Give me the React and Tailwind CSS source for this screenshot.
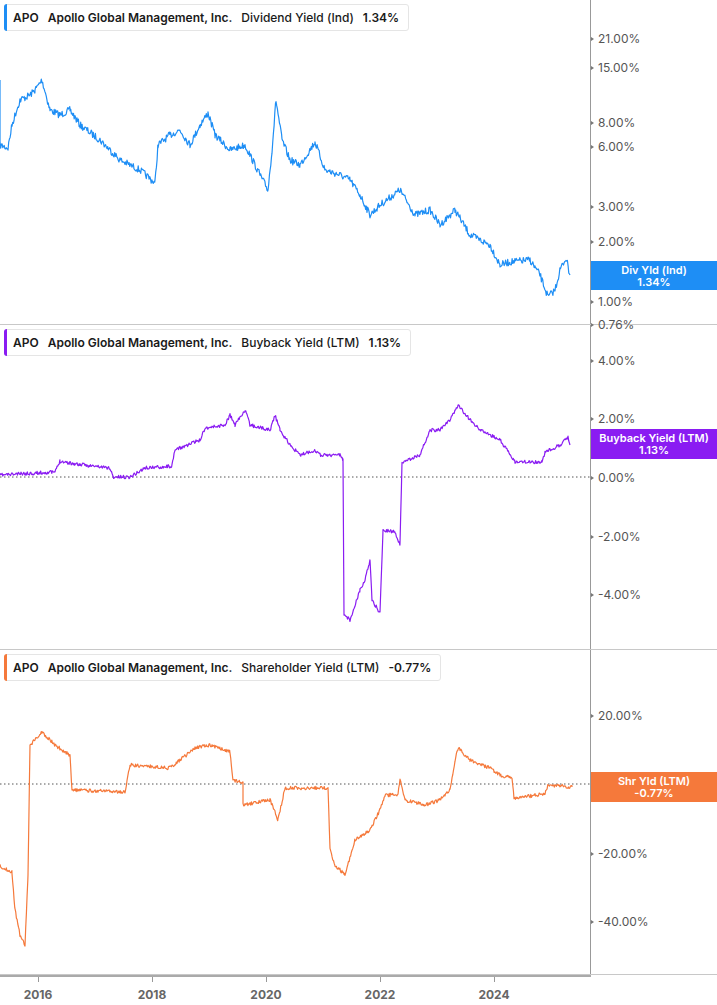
import React from "react";

function rng(seed){let s=seed;return()=>{s=(s*16807)%2147483647;return s/2147483647;};}
function series(pts,noise,seed,yOff){
  const r=rng(seed);const out=[];
  for(let i=0;i<pts.length-1;i++){
    const [x0,y0]=pts[i],[x1,y1]=pts[i+1];
    if(x1===x0){out.push([x0,y0-yOff]);continue;}
    for(let x=x0;x<x1;x+=0.7){
      const t=(x-x0)/(x1-x0);
      out.push([x,y0+(y1-y0)*t-yOff+(r()-0.5)*noise]);
    }
  }
  const l=pts[pts.length-1];out.push([l[0],l[1]-yOff]);
  return out.map(p=>p[0].toFixed(1)+","+p[1].toFixed(1)).join(" ");
}
const blue=[[0,80],[0,145],[8,148],[12,125],[15,115],[20,100],[30,95],[35,90],[42,80],[50,110],[60,115],[70,110],[80,125],[100,140],[120,160],[140,170],[155,183],[158,145],[170,135],[180,130],[190,145],[200,125],[208,113],[215,135],[230,150],[245,145],[260,175],[268,190],[272,150],[276,100],[282,140],[290,160],[300,165],[315,142],[325,170],[340,175],[350,180],[360,195],[370,215],[380,205],[400,190],[415,215],[430,210],[440,225],[455,210],[470,235],[490,245],[500,265],[510,262],[530,260],[540,275],[548,297],[555,290],[560,270],[566,258],[570,275]];
const purple=[[0,475],[55,472],[60,461],[75,464],[110,468],[113,477],[130,477],[145,468],[172,466],[175,450],[200,440],[205,428],[225,425],[230,415],[235,425],[245,410],[250,425],[270,430],[275,415],[280,430],[290,445],[300,455],[315,450],[320,455],[340,455],[343,460],[344,615],[350,620],[360,590],[365,580],[370,560],[372,600],[380,613],[383,530],[395,532],[400,545],[402,462],[420,455],[430,430],[440,430],[450,420],[458,405],[470,420],[480,430],[500,440],[515,462],[530,462],[542,462],[545,452],[560,445],[568,437],[570,445]];
const orange=[[0,866],[12,872],[15,910],[20,935],[25,945],[28,875],[30,745],[42,732],[55,745],[70,755],[72,790],[125,792],[130,765],[170,768],[195,748],[210,745],[230,752],[233,780],[243,782],[243,805],[270,800],[278,820],[285,788],[328,788],[330,850],[335,865],[345,875],[355,840],[370,830],[380,810],[385,795],[398,795],[400,778],[405,800],[425,805],[440,800],[450,790],[455,760],[458,748],[470,760],[490,768],[500,775],[512,778],[514,798],[545,794],[548,785],[560,786],[572,787]];

const F={fontFamily:"Inter, 'Liberation Sans', sans-serif"};
function Panel({top,h,color,legend,metric,val,pts,noise,seed,labels,badge,zero}){
  return(
    <div className="relative w-full border-b border-[#c8c8c8]" style={{height:h}}>
      <svg className="absolute left-0 top-0" width="590" height={h}>
        {zero!=null&&<line x1="0" x2="590" y1={zero-top} y2={zero-top} stroke="#555" strokeDasharray="1.5 2.5" strokeWidth="1"/>}
        <polyline points={series(pts,noise,seed,top)} fill="none" stroke={color} strokeWidth="1.2" strokeLinejoin="round"/>
      </svg>
      <div className="absolute left-[590px] top-0 h-full w-px bg-[#999]"/>
      <div className="absolute left-[4px] top-[4px] flex h-[27px] items-center gap-[9px] rounded-[3px] border border-[#e5e5e5] bg-white pl-[8px] pr-[9px] text-[12px] font-semibold text-[#1a1a1a]" style={F}>
        <div className="absolute left-[-1px] top-[-1px] h-[27px] w-[3px] rounded-l-[3px]" style={{background:color}}/>
        <span>APO</span><span>{legend}</span><span className="font-medium">{metric}</span><span>{val}</span>
      </div>
      {labels.map(([t,y])=>(
        <div key={t} className="absolute left-[591px] flex items-center text-[12px] text-[#555]" style={{top:y-top-8,...F}}>
          <span className="mr-[4px] inline-block h-0 w-0 border-y-[2px] border-l-[3px] border-y-transparent border-l-[#777]"/>{t}
        </div>
      ))}
      <div className="absolute left-[591px] flex w-[126px] flex-col items-center justify-center text-[11px] font-semibold leading-[12px] text-white" style={{top:badge[0]-top,height:badge[1],background:color,...F}}>
        <span>{badge[2]}</span><span>{val}</span>
      </div>
    </div>
  );
}

export default function App(){
  return(
    <div className="relative h-[1005px] w-[717px] overflow-hidden bg-white">
      <Panel top={0} h={325} color="#1e8ef5" legend="Apollo Global Management, Inc." metric="Dividend Yield (Ind)" val="1.34%" pts={blue} noise={7} seed={7}
        labels={[["21.00%",38],["15.00%",67],["8.00%",122],["6.00%",146],["3.00%",206],["2.00%",241],["1.00%",301],["0.76%",324]]} badge={[261,29,"Div Yld (Ind)"]}/>
      <Panel top={325} h={325} color="#8a1cf2" legend="Apollo Global Management, Inc." metric="Buyback Yield (LTM)" val="1.13%" pts={purple} noise={3.5} seed={11} zero={477}
        labels={[["4.00%",360],["2.00%",418],["0.00%",477],["-2.00%",536],["-4.00%",594]]} badge={[429,30,"Buyback Yield (LTM)"]}/>
      <Panel top={650} h={325} color="#f5793b" legend="Apollo Global Management, Inc." metric="Shareholder Yield (LTM)" val="-0.77%" pts={orange} noise={3.5} seed={13} zero={784}
        labels={[["20.00%",715],["0.00%",784],["-20.00%",853],["-40.00%",921]]} badge={[772,30,"Shr Yld (LTM)"]}/>
      <div className="relative h-[30px] w-[591px] border-t-2 border-[#aaa]">
        {[["2016",38],["2018",152],["2020",266],["2022",380],["2024",494]].map(([t,x])=>(
          <div key={t} className="absolute top-0 flex flex-col items-center" style={{left:x-20,width:40}}>
            <div className="h-[5px] w-px bg-[#999]"/>
            <span className="mt-[4px] text-[12px] font-bold text-[#666]" style={F}>{t}</span>
          </div>
        ))}
      </div>
    </div>
  );
}
